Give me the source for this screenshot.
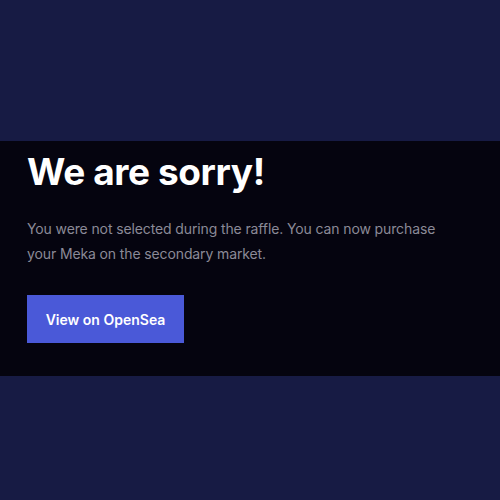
const App = () => {
    return (
        <div className="w-full h-[500px] bg-[#171b44] pt-[141px] overflow-hidden" style={{ fontFamily: 'Inter, "Liberation Sans", sans-serif' }}>
            <div className="w-full h-[235px] bg-[#05040f] px-[27px] pt-[9px]">
                <h1 className="text-white font-bold text-[37px] leading-[44px] tracking-[-0.4px]">We are sorry!</h1>
                <p className="mt-[22px] text-[#8b8a97] text-[14px] leading-[25px] tracking-[-0.12px] w-[430px]">
                    You were not selected during the raffle. You can now purchase your Meka on the secondary market.
                </p>
                <button className="mt-[29px] w-[157px] h-[48px] bg-[#4a59d8] text-white font-semibold text-[14px]">View on OpenSea</button>
            </div>
        </div>
    )
}

export default App;
